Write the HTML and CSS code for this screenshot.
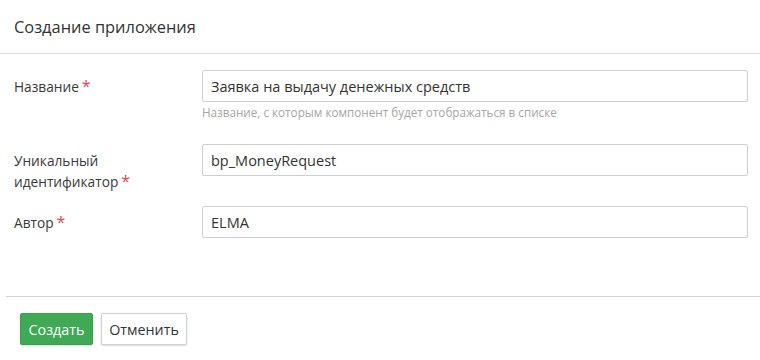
FILE: index.html
```html
<!DOCTYPE html>
<html lang="ru">
<head>
<meta charset="utf-8">
<title>Создание приложения</title>
<link rel="stylesheet" href="styles.css">
</head>
<body>
<div class="dialog">
  <div class="header"><span class="title">Создание приложения</span></div>
  <div class="content">
    <div class="row row-first">
      <label class="label">Название<span class="req">*</span></label>
      <div class="field">
        <input class="input" type="text" value="Заявка на выдачу денежных средств">
        <div class="hint">Название, с которым компонент будет отображаться в списке</div>
      </div>
    </div>
    <div class="row row-second">
      <label class="label">Уникальный<br>идентификатор<span class="req">*</span></label>
      <div class="field">
        <input class="input" type="text" value="bp_MoneyRequest">
      </div>
    </div>
    <div class="row">
      <label class="label">Автор<span class="req">*</span></label>
      <div class="field">
        <input class="input" type="text" value="ELMA">
      </div>
    </div>
  </div>
  <div class="footer">
    <button class="btn btn-primary">Создать</button>
    <button class="btn btn-default">Отменить</button>
  </div>
</div>
</body>
</html>
```

FILE: styles.css
```css
* { box-sizing: border-box; }
html, body {
  margin: 0;
  padding: 0;
  background: #fff;
  font-family: "Open Sans", "Noto Sans", sans-serif;
  color: #333;
}
.dialog {
  width: 760px;
  height: 360px;
}
.header {
  height: 54px;
  padding: 0 14px;
  border-bottom: 1px solid #d9d9d9;
  display: flex;
  align-items: center;
}
.title {
  font-size: 16.4px;
  color: #333;
  margin-top: -1px;
}
.content {
  height: 242px;
  padding: 16px 12px 0 14px;
}
.row {
  display: flex;
  align-items: flex-start;
}
.row-first { margin-bottom: 24px; }
.row-second { margin-bottom: 14px; }
.label {
  width: 188px;
  flex: none;
  font-size: 13.7px;
  line-height: 21px;
  padding-top: 6px;
  color: #3a3a3a;
}
.req {
  color: #e8474f;
  margin-left: 3px;
  font-size: 16px;
  line-height: 1;
}
.field {
  flex: 1;
}
.input {
  display: block;
  width: 100%;
  height: 32px;
  border: 1px solid #cfcfcf;
  border-radius: 2px;
  padding: 0 8px;
  font-family: "Open Sans", "Noto Sans", sans-serif;
  font-size: 14.5px;
  color: #333;
  outline: none;
  background: #fff;
}
.hint {
  font-size: 11.7px;
  color: #a6a6a6;
  line-height: 16px;
  margin-top: 2px;
}
.footer {
  margin-left: 6px;
  border-top: 1px solid #d4d4d4;
  padding: 16px 0 0 14px;
  display: flex;
  gap: 8px;
}
.btn {
  height: 32px;
  font-family: "Open Sans", "Noto Sans", sans-serif;
  font-size: 14.3px;
  border-radius: 2px;
  padding: 0;
  cursor: pointer;
}
.btn-primary {
  width: 73px;
  background: #40a956;
  color: #fff;
  border: 1px solid #3ba150;
  box-shadow: 0 1px 2px rgba(0,0,0,0.15);
}
.btn-default {
  width: 86px;
  background: #fff;
  color: #333;
  border: 1px solid #d0d0d0;
  box-shadow: 0 1px 2px rgba(0,0,0,0.15);
}
```
